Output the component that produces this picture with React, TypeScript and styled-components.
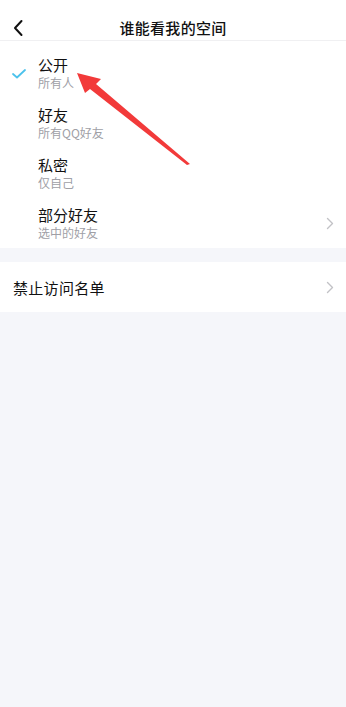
import styled, { createGlobalStyle } from "styled-components";

const GlobalStyle = createGlobalStyle`
  html, body {
    margin: 0;
    padding: 0;
    background: #f5f6fa;
    font-family: "Noto Sans CJK SC", "Noto Sans", sans-serif;
  }
`;

const Page = styled.div`
  position: relative;
  width: 346px;
  min-height: 707px;
  background: #f5f6fa;
`;

const Header = styled.header`
  height: 40px;
  display: flex;
  align-items: center;
  justify-content: center;
  position: relative;
  background: #fff;
  border-bottom: 1px solid #f0f0f2;
`;

const BackButton = styled.div`
  position: absolute;
  left: 12px;
  top: 18px;
  width: 14px;
  height: 18px;
`;

const Title = styled.h1`
  margin: 0;
  margin-top: 14px;
  font-size: 15px;
  font-weight: 500;
  color: #111;
  letter-spacing: 0.3px;
`;

const Section = styled.div<{ $padTop?: number }>`
  background: #fff;
  padding-top: ${(p) => p.$padTop || 0}px;
  margin-bottom: 14px;
`;

const Row = styled.div`
  height: 50px;
  display: flex;
  align-items: center;
  position: relative;
`;

const CheckSlot = styled.div`
  width: 38px;
  flex-shrink: 0;
  display: flex;
  justify-content: flex-start;
  padding-left: 12px;
  box-sizing: border-box;
  padding-top: 2px;
`;

const Texts = styled.div`
  flex: 1;
  display: flex;
  flex-direction: column;
`;

const ItemTitle = styled.div`
  font-size: 15px;
  line-height: 18px;
  color: #111;
`;

const ItemSub = styled.div`
  font-size: 12px;
  line-height: 16px;
  color: #a0a0a6;
  margin-top: 1px;
`;

const Plain = styled.div`
  flex: 1;
  padding-left: 13px;
  font-size: 15px;
  color: #111;
  letter-spacing: 0.3px;
`;

const Chevron = styled.div`
  width: 8px;
  margin-right: 12px;
  display: flex;
  align-items: center;
`;

const ArrowLayer = styled.svg`
  position: absolute;
  left: 0;
  top: 0;
  pointer-events: none;
`;

const Check = () => (
  <svg width="14" height="10" viewBox="0 0 14 10">
    <path d="M1 5 L5 8.5 L13 1" fill="none" stroke="#4cc2ec" strokeWidth="1.8" strokeLinecap="round" strokeLinejoin="round" />
  </svg>
);

const Right = () => (
  <svg width="8" height="13" viewBox="0 0 8 13">
    <path d="M1.5 1.5 L6.5 6.5 L1.5 11.5" fill="none" stroke="#c2c2c6" strokeWidth="1.4" strokeLinecap="round" strokeLinejoin="round" />
  </svg>
);

const options = [
  { title: "公开", sub: "所有人", checked: true },
  { title: "好友", sub: "所有QQ好友" },
  { title: "私密", sub: "仅自己" },
  { title: "部分好友", sub: "选中的好友", more: true },
];

export default function App() {
  return (
    <Page>
      <GlobalStyle />
      <Header>
        <BackButton>
          <svg width="14" height="18" viewBox="0 0 14 18">
            <path d="M9.5 2 L3 9 L9.5 16" fill="none" stroke="#111" strokeWidth="2" strokeLinecap="round" strokeLinejoin="round" />
          </svg>
        </BackButton>
        <Title>谁能看我的空间</Title>
      </Header>
      <Section $padTop={7}>
        {options.map((o) => (
          <Row key={o.title}>
            <CheckSlot>{o.checked && <Check />}</CheckSlot>
            <Texts>
              <ItemTitle>{o.title}</ItemTitle>
              <ItemSub>{o.sub}</ItemSub>
            </Texts>
            {o.more && (
              <Chevron>
                <Right />
              </Chevron>
            )}
          </Row>
        ))}
      </Section>
      <Section>
        <Row>
          <Plain>禁止访问名单</Plain>
          <Chevron>
            <Right />
          </Chevron>
        </Row>
      </Section>
      <ArrowLayer width="346" height="707" viewBox="0 0 346 707">
        <polygon
          points="77,73 101,79 96,84 190,164 187,165 90,89 85,93"
          fill="#f23a3a"
        />
      </ArrowLayer>
    </Page>
  );
}
